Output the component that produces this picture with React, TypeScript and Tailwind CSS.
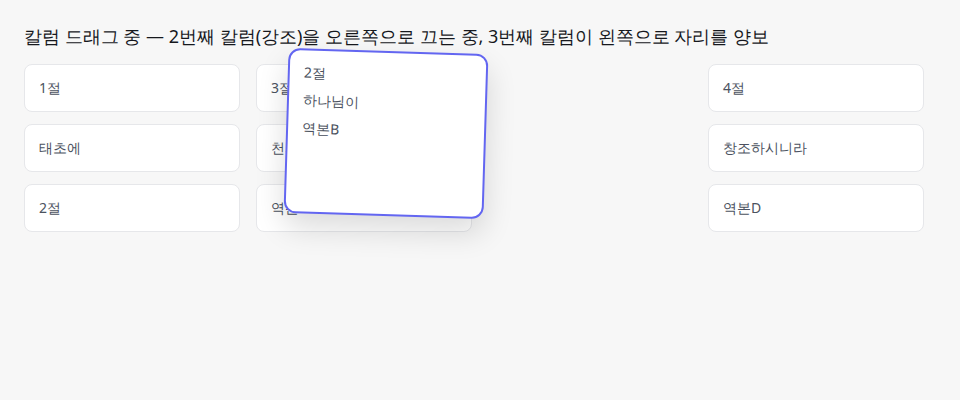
type Column = { id: string; items: string[] };

const columns: Column[] = [
  { id: "c1", items: ["1절", "태초에", "2절"] },
  { id: "c3", items: ["3절", "천지를", "역본C"] },
  { id: "c4", items: ["4절", "창조하시니라", "역본D"] },
];

function Cell({ text }: { text: string }) {
  return (
    <div className="flex h-12 items-center rounded-lg border border-[#e6e7ea] bg-white px-3.5 text-sm text-[#4b5260]">
      {text}
    </div>
  );
}

function ColumnView({ col }: { col: Column }) {
  return (
    <div className="flex w-[216px] shrink-0 flex-col gap-3">
      {col.items.map((t, i) => (
        <Cell key={i} text={t} />
      ))}
    </div>
  );
}

export default function App() {
  return (
    <div className="relative h-[400px] w-[960px] overflow-hidden bg-[#f7f7f7] px-6 pt-[22px] font-sans">
      <h1 className="text-lg leading-7 text-[#16181d]">
        칼럼 드래그 중 — 2번째 칼럼(강조)을 오른쪽으로 끄는 중, 3번째 칼럼이 왼쪽으로 자리를 양보
      </h1>

      <div className="mt-3.5 flex gap-4">
        <ColumnView col={columns[0]} />
        <ColumnView col={columns[1]} />
        {/* placeholder slot */}
        <div className="w-[204px] shrink-0" />
        <ColumnView col={columns[2]} />
      </div>

      {/* dragged column */}
      <div className="absolute left-[286px] top-[51px] flex h-[165px] w-[200px] rotate-[1.75deg] flex-col gap-2 rounded-xl border-2 border-[#6366f1] bg-white px-3.5 py-3 text-sm leading-5 text-[#4b5260] shadow-[0_14px_30px_rgba(0,0,0,0.14)]">
        <div>2절</div>
        <div>하나님이</div>
        <div>역본B</div>
      </div>
    </div>
  );
}
